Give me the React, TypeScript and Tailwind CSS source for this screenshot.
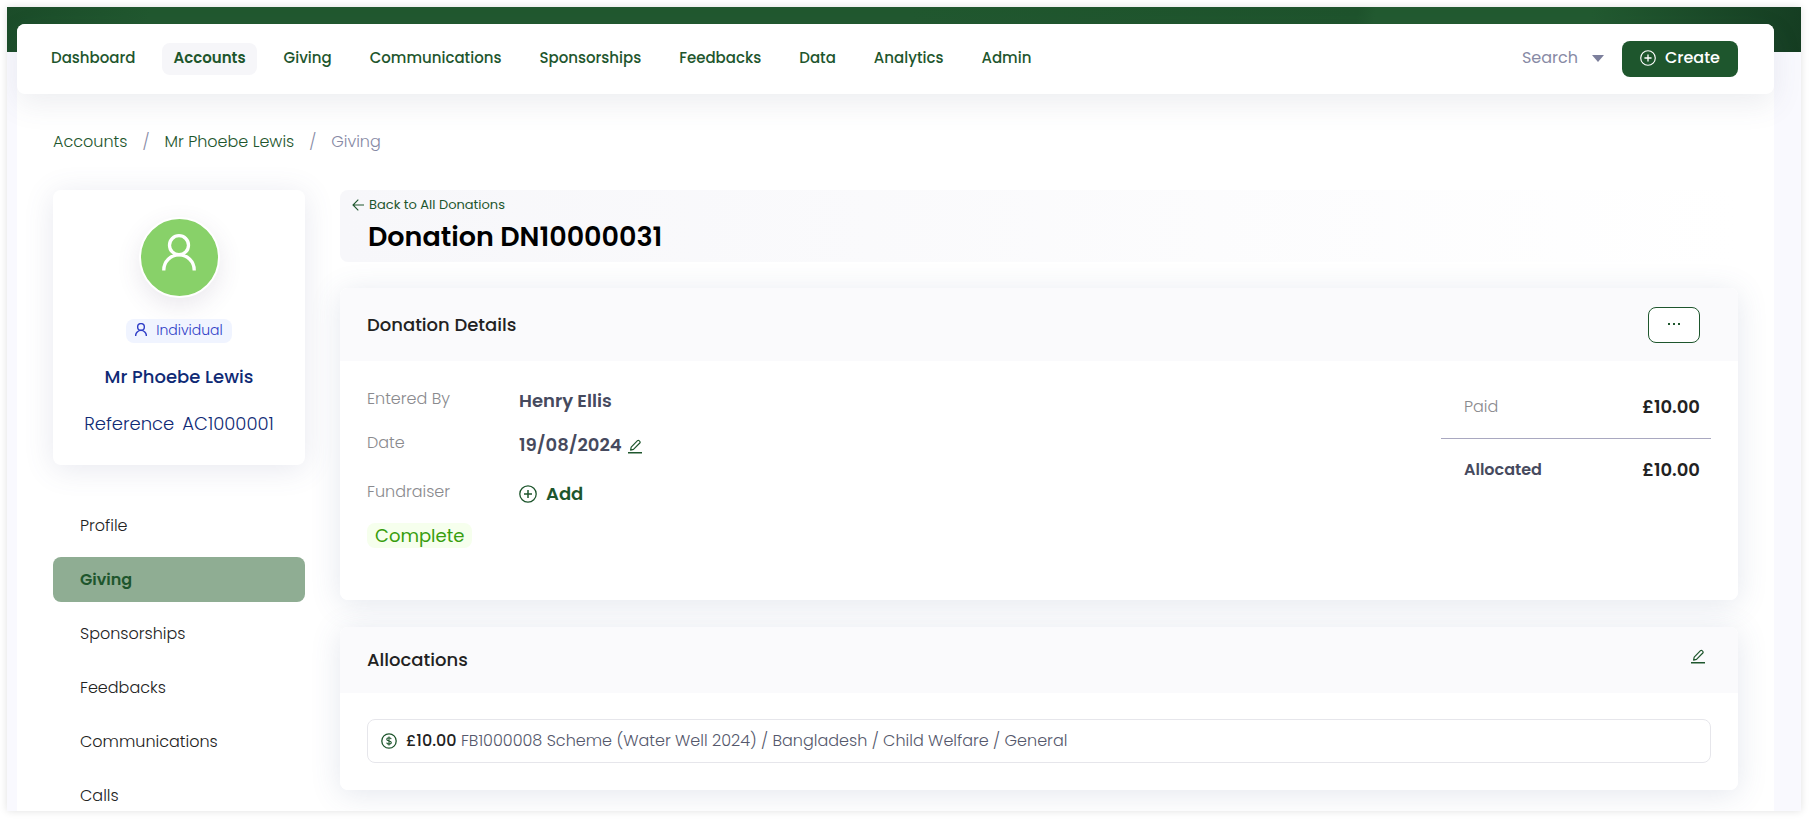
import type { ReactNode } from "react";

const navItems = ["Dashboard", "Accounts", "Giving", "Communications", "Sponsorships", "Feedbacks", "Data", "Analytics", "Admin"];
const menuItems = ["Profile", "Giving", "Sponsorships", "Feedbacks", "Communications", "Calls"];

function UserIcon({ width, strokeWidth }: { width: number; strokeWidth: number }) {
  return (
    <svg width={width} height={(width * 37) / 34} viewBox="0 0 34 37" fill="none" stroke="currentColor" strokeWidth={strokeWidth} aria-hidden="true">
      <circle cx="17" cy="11.2" r="9.5" />
      <path d="M1.8 36.6V36a15.2 15.2 0 0 1 30.4 0v.6" />
    </svg>
  );
}

function PlusCircleIcon({ size }: { size: number }) {
  return (
    <svg width={size} height={size} viewBox="0 0 18 18" fill="none" stroke="currentColor" strokeWidth="1.3" aria-hidden="true">
      <circle cx="9" cy="9" r="8.2" />
      <path d="M9 5v8M5 9h8" strokeWidth="1.5" />
    </svg>
  );
}

function PencilIcon() {
  return (
    <svg width="14" height="15" viewBox="0 0 14 15" fill="none" stroke="currentColor" strokeWidth="1.2" strokeLinejoin="round" aria-hidden="true">
      <path d="M2.6 11.2l.6-3.1 6.3-6.4a1.1 1.1 0 0 1 1.6 0l.7.7a1.1 1.1 0 0 1 0 1.6l-6.3 6.4z" />
      <path d="M0 13.8h14" strokeWidth="1.4" />
    </svg>
  );
}

function DollarIcon() {
  return (
    <svg width="16" height="16" viewBox="0 0 16 16" fill="none" stroke="currentColor" strokeWidth="1.3" aria-hidden="true">
      <circle cx="8" cy="8" r="7.2" />
      <path d="M10.2 6.2C10 5.3 9.200 4.800 8 4.800c-1.300 0-2.200.6-2.200 1.600 0 2.200 4.500.9 4.500 3.200 0 1-.9 1.600-2.300 1.600-1.300 0-2.200-.6-2.300-1.600M8 3.500v9" strokeWidth="1.1" />
    </svg>
  );
}

function BackArrowIcon() {
  return (
    <svg width="12" height="12" viewBox="0 0 12 12" fill="none" stroke="currentColor" strokeWidth="1.1" aria-hidden="true">
      <path d="M12 6H1M6.300.7L1 6l5.300 5.300" />
    </svg>
  );
}

function TopNav() {
  return (
    <header className="relative z-10 flex h-[70px] items-center justify-between rounded-lg bg-white pr-9 pl-[23px] shadow-[0_10px_30px_rgba(82,92,120,0.1)]">
      <nav aria-label="Main" className="flex gap-4">
        {navItems.map((item) => (
          <a
            key={item}
            href="#"
            className={
              item === "Accounts"
                ? "rounded-lg bg-[#f6f6f9] px-[11px] pb-[2px] text-[15px] leading-[30px] font-semibold text-[#1e562d]"
                : "rounded-lg px-[11px] pb-[2px] text-[15px] leading-[30px] font-medium text-[#1e562d]"
            }
          >
            {item}
          </a>
        ))}
      </nav>
      <div className="flex items-center gap-[18px]">
        <button type="button" className="flex items-center gap-[14px] pb-[2px] text-base text-[#878aa5]">
          Search
          <svg width="12" height="7" viewBox="0 0 12 7" fill="#7c7f9c" aria-hidden="true">
            <path d="M0 0h12L6 7z" />
          </svg>
        </button>
        <button type="button" className="flex h-9 items-center gap-[9px] rounded-lg bg-[#1e562d] px-[18px] pb-[2px] text-base font-medium text-white">
          <PlusCircleIcon size={16} />
          Create
        </button>
      </div>
    </header>
  );
}

function Breadcrumb() {
  return (
    <nav aria-label="Breadcrumb" className="flex gap-[15px] text-base leading-6 font-light text-[#1e562d]">
      <a href="#">Accounts</a>
      <span className="text-[#878aa5]">/</span>
      <a href="#">Mr Phoebe Lewis</a>
      <span className="text-[#878aa5]">/</span>
      <span className="text-[#878aa5]">Giving</span>
    </nav>
  );
}

function Sidebar() {
  return (
    <aside className="w-[252px] shrink-0">
      <section className="flex h-[275px] flex-col items-center rounded-lg bg-white pt-[27px] text-[#0f2a75] shadow-[0_4px_30px_rgba(82,92,140,0.14)]">
        <div className="flex h-[81px] w-[81px] justify-center rounded-full border-2 border-white bg-[#88d169] pt-[15px] text-white shadow-[0_8px_24px_rgba(82,63,105,0.12)]">
          <UserIcon width={34} strokeWidth={3.3} />
        </div>
        <span className="mt-[21px] flex h-6 items-center gap-[9px] rounded-lg bg-[#f0f4ff] px-[9px] pb-[2px] text-sm font-light text-[#2f3ec7]">
          <UserIcon width={12} strokeWidth={4} />
          Individual
        </span>
        <h2 className="mt-5 text-lg leading-7 font-medium">Mr Phoebe Lewis</h2>
        <p className="mt-[19px] flex gap-2 text-lg leading-7 font-light">
          <span>Reference</span>
          <span>AC1000001</span>
        </p>
      </section>
      <nav aria-label="Account" className="mt-[38px] flex flex-col gap-[9px]">
        {menuItems.map((item) => (
          <a
            key={item}
            href="#"
            className={
              item === "Giving"
                ? "rounded-lg bg-[#8fad93] px-[27px] text-base leading-[45px] font-semibold text-[#1e562d]"
                : "rounded-lg px-[27px] text-base leading-[45px] font-light text-[#222]"
            }
          >
            {item}
          </a>
        ))}
      </nav>
    </aside>
  );
}

function Row({ label, children }: { label: string; children: ReactNode }) {
  return (
    <div className="flex">
      <dt className="w-[152px] text-base leading-[26px] font-light text-[#8a8a8e]">{label}</dt>
      <dd className="flex items-center gap-[6px] text-lg leading-[30px] font-semibold text-[#464a5e]">{children}</dd>
    </div>
  );
}

const cardClass = "overflow-hidden rounded-lg bg-white";
const shadowClass = "rounded-lg shadow-[0_4px_30px_rgba(72,92,140,0.15)]";

function DonationDetails() {
  return (
    <div className={shadowClass}>
      <section className={cardClass}>
        <div className="flex h-[73px] items-center justify-between bg-[#fafafc] pr-[38px] pl-[27px]">
          <h2 className="text-lg font-medium text-[#222]">Donation Details</h2>
          <button
            type="button"
            aria-label="More actions"
            className="flex h-9 w-[52px] justify-center rounded-lg border border-[#1e562d] bg-white pt-[15px] text-[#1e562d]"
          >
            <svg width="12" height="2" viewBox="0 0 12 2" fill="currentColor" aria-hidden="true">
              <path d="M0 0h2v2H0zM5 0h2v2H5zM10 0h2v2h-2z" />
            </svg>
          </button>
        </div>
        <div className="flex h-[239px] justify-between px-[27px] pt-[25px]">
          <div>
            <dl className="flex flex-col gap-[14px]">
              <Row label="Entered By">Henry Ellis</Row>
              <Row label="Date">
                19/08/2024
                <button type="button" aria-label="Edit date" className="pt-[2px] text-[#1e562d]">
                  <PencilIcon />
                </button>
              </Row>
              <div className="pt-[5px]">
                <Row label="Fundraiser">
                  <button type="button" className="flex items-center gap-[9px] text-[#1e562d]">
                    <PlusCircleIcon size={18} />
                    Add
                  </button>
                </Row>
              </div>
            </dl>
            <span className="mt-[14px] inline-block rounded-lg bg-[#f6ffed] px-2 text-lg leading-[25px] text-[#389e0d]">Complete</span>
          </div>
          <dl className="w-[270px]">
            <div className="flex items-center justify-between border-b border-[#a9a8c0] pt-[6px] pr-[11px] pb-4 pl-[23px]">
              <dt className="text-base font-light text-[#8a8a8e]">Paid</dt>
              <dd className="text-lg leading-[30px] font-semibold text-[#222]">£10.00</dd>
            </div>
            <div className="flex items-center justify-between pt-4 pr-[11px] pl-[23px]">
              <dt className="text-base font-semibold text-[#464a5e]">Allocated</dt>
              <dd className="text-lg leading-[30px] font-semibold text-[#222]">£10.00</dd>
            </div>
          </dl>
        </div>
      </section>
    </div>
  );
}

function Allocations() {
  return (
    <div className={shadowClass}>
      <section className={cardClass}>
        <div className="flex h-[66px] items-center justify-between bg-[#fafafc] pr-[33px] pl-[27px]">
          <h2 className="text-lg font-medium text-[#222]">Allocations</h2>
          <button type="button" aria-label="Edit allocations" className="pb-2 text-[#1e562d]">
            <PencilIcon />
          </button>
        </div>
        <div className="px-[27px] pt-[26px] pb-[27px]">
          <div className="flex h-11 items-center rounded-lg border border-[#e6e6eb] px-[13px]">
            <span className="mr-[9px] text-[#1e562d]">
              <DollarIcon />
            </span>
            <p className="text-base font-light text-[#55586c]">
              <strong className="font-medium text-[#222]">£10.00</strong> FB1000008 Scheme (Water Well 2024) / Bangladesh / Child Welfare / General
            </p>
          </div>
        </div>
      </section>
    </div>
  );
}

export default function App() {
  return (
    <div className="h-screen overflow-hidden bg-white p-[7px] pr-2 pb-2 font-[Poppins,Inter,sans-serif]">
      <div className="h-full overflow-hidden bg-[linear-gradient(100deg,#1b4c29_0,#21582f_8%,#21582f_50%,#1e532c_75%,#225a30_76%,#225a30_88%,#153d22_100%)] bg-[length:100%_45px] bg-no-repeat shadow-[0_0_8px_rgba(0,0,0,0.12)]">
        <div className="h-full bg-[linear-gradient(transparent_45px,#f9f9fe_45px)] pt-[17px] pr-[27px] pl-[10px]">
          <div className="h-full rounded-t-lg bg-white">
            <TopNav />
            <div className="px-9 pt-9">
              <Breadcrumb />
              <div className="mt-9 flex gap-[35px]">
                <Sidebar />
                <main className="min-w-0 flex-1">
                  <div className="mb-[26px] h-[72px] rounded-lg bg-linear-to-r from-[#f7f7fa] to-white pt-[5px] pl-3 text-[#1e562d]">
                    <a href="#" className="flex items-center gap-[5px] text-[13px] leading-5">
                      <BackArrowIcon />
                      Back to All Donations
                    </a>
                    <h1 className="pl-4 text-[27px] leading-[44px] font-semibold text-black">Donation DN10000031</h1>
                  </div>
                  <div className="flex flex-col gap-[27px]">
                    <DonationDetails />
                    <Allocations />
                  </div>
                </main>
              </div>
            </div>
          </div>
        </div>
      </div>
    </div>
  );
}
